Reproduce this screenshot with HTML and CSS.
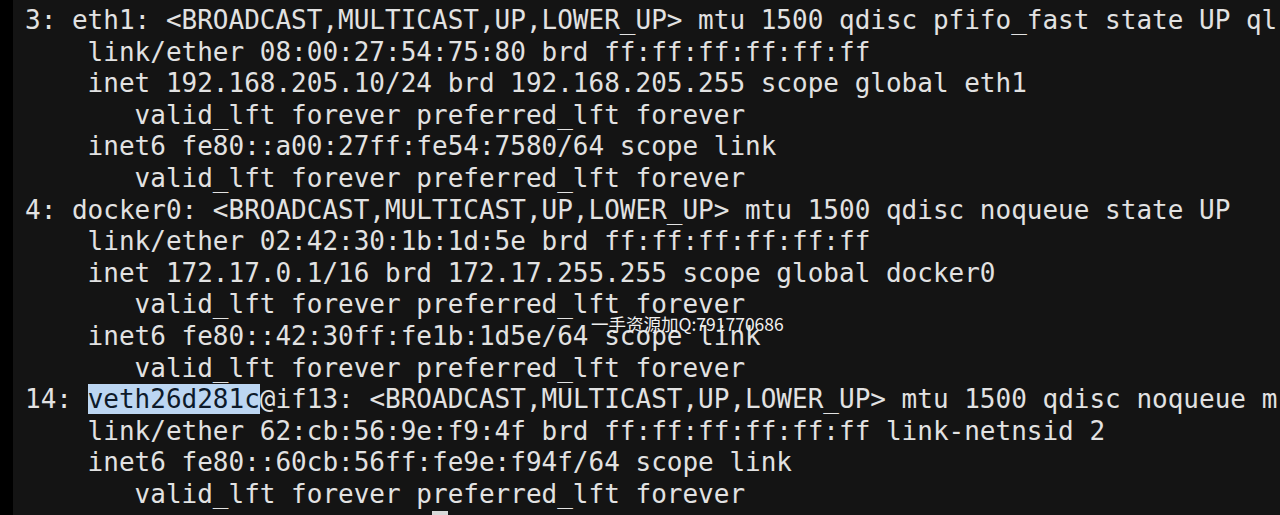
FILE: index.html
```html
<!DOCTYPE html>
<html lang="en">
<head>
  <meta charset="UTF-8">
  <title>ip addr</title>
  <link rel="stylesheet" href="styles.css">
</head>
<body>

<div class="screen">
  <div class="edge"></div>
  <pre class="term">3: eth1: &lt;BROADCAST,MULTICAST,UP,LOWER_UP&gt; mtu 1500 qdisc pfifo_fast state UP ql
    link/ether 08:00:27:54:75:80 brd ff:ff:ff:ff:ff:ff
    inet 192.168.205.10/24 brd 192.168.205.255 scope global eth1
       valid_lft forever preferred_lft forever
    inet6 fe80::a00:27ff:fe54:7580/64 scope link
       valid_lft forever preferred_lft forever
4: docker0: &lt;BROADCAST,MULTICAST,UP,LOWER_UP&gt; mtu 1500 qdisc noqueue state UP
    link/ether 02:42:30:1b:1d:5e brd ff:ff:ff:ff:ff:ff
    inet 172.17.0.1/16 brd 172.17.255.255 scope global docker0
       valid_lft forever preferred_lft forever
    inet6 fe80::42:30ff:fe1b:1d5e/64 scope link
       valid_lft forever preferred_lft forever
14: <span class="sel">veth26d281c</span>@if13: &lt;BROADCAST,MULTICAST,UP,LOWER_UP&gt; mtu 1500 qdisc noqueue m
    link/ether 62:cb:56:9e:f9:4f brd ff:ff:ff:ff:ff:ff link-netnsid 2
    inet6 fe80::60cb:56ff:fe9e:f94f/64 scope link
       valid_lft forever preferred_lft forever
                          <span class="cursor"> </span></pre>
  <div class="mark">一手资源加Q:791770686</div>
</div>

</body>
</html>
```

FILE: styles.css
```css
html, body { margin:0; padding:0; background:#141414; }
body { width:1280px; height:515px; overflow:hidden; }
.screen { position:relative; display:flex; height:515px; background:#141414; }
.edge { width:13px; flex:none; background:#000; }
.term {
  margin:0;
  padding:5px 0 0 12px;
  font-family:"DejaVu Sans Mono", monospace;
  font-size:26px;
  line-height:31.6px;
  color:#e2e2e2;
  white-space:pre;
  overflow:hidden;
}
.sel { background:#bcd6f2; color:#0d1a2a; }
.cursor { background:#d8d8d8; }
.mark {
  position:absolute;
  left:591px;
  top:313px;
  font-family:"Noto Sans CJK SC", sans-serif;
  font-size:17.5px;
  line-height:22px;
  color:#f0f0f0;
}
```
